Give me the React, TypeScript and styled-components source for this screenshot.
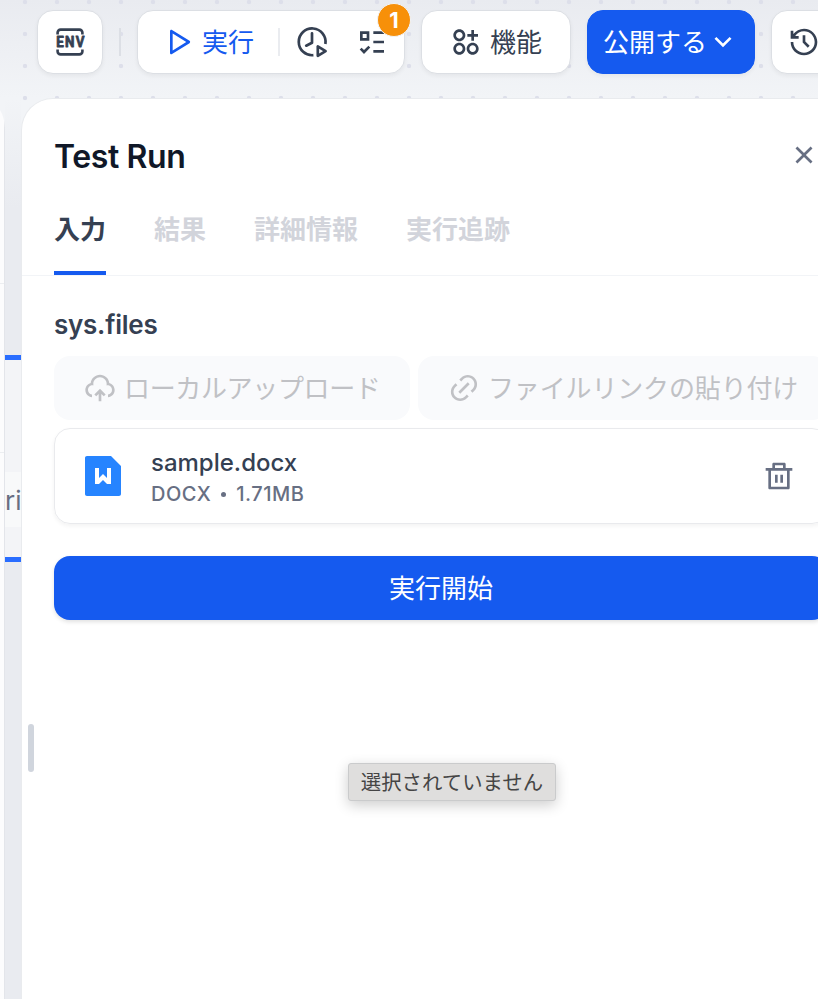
import React, { FC, useState } from 'react'
import styled, { createGlobalStyle } from 'styled-components'
import {
	RiApps2AddLine,
	RiArrowDownSLine,
	RiCloseLine,
	RiDeleteBinLine,
	RiFileWordFill,
	RiHistoryLine,
	RiLink,
	RiListCheck3,
	RiPlayLargeLine,
	RiUploadCloud2Line,
} from 'react-icons/ri'


const tabs = ['入力', '結果', '詳細情報', '実行追跡']

const EnvIcon: FC = () => (
	<svg width='40' height='32' viewBox='-4 0 40 32' fill='none'>
		<path d='M3.6 8.4V6.6a3 3 0 0 1 3-3h18.8a3 3 0 0 1 3 3v1.8' stroke='currentColor' strokeWidth='2.6' />
		<path d='M3.6 23.6v1.8a3 3 0 0 0 3 3h18.8a3 3 0 0 0 3-3v-1.8' stroke='currentColor' strokeWidth='2.6' />
		<EnvText x='2.2' y='21.2' textLength='29.5' lengthAdjust='spacingAndGlyphs'>ENV</EnvText>
	</svg>
)

const ClockPlayIcon: FC = () => (
	<svg width='32' height='32' viewBox='0 0 32 32' fill='none' stroke='currentColor' strokeWidth='2.7'>
		<path d='M17.4 29.2A13.4 13.4 0 1 1 29.4 18' />
		<path d='M16 7.3v9.4l-5.8 3' strokeLinejoin='round' strokeLinecap='round' />
		<path d='M21.8 20.4v9.4l7.8-4.7z' strokeLinejoin='round' />
	</svg>
)

const App: FC = () => {
	const [activeTab, setActiveTab] = useState(tabs[0])

	return (
		<Page>
			<GlobalStyle />
			<Toolbar>
				<EnvButton><EnvIcon /></EnvButton>
				<ToolbarDivider />
				<RunGroup>
					<RunAction><RiPlayLargeLine size={32} /><ButtonText>実行</ButtonText></RunAction>
					<GroupDivider />
					<ClockPlayIcon />
					<Checklist>
						<RiListCheck3 size={32} />
						<Badge>1</Badge>
					</Checklist>
				</RunGroup>
				<FeaturesButton><RiApps2AddLine size={32} /><ButtonText>機能</ButtonText></FeaturesButton>
				<PublishButton><ButtonText>公開する</ButtonText><RiArrowDownSLine size={32} /></PublishButton>
				<HistoryButton><RiHistoryLine size={32} /></HistoryButton>
			</Toolbar>
			<Workspace>
				<SidePanel><SideRow $height={186} /><SideRow $height={169} /></SidePanel>
				<Gutter>
					<NodeSlice><NodeLabel>ri</NodeLabel></NodeSlice>
				</Gutter>
				<Panel>
					<ResizeHandle />
					<Header>
						<Title>Test Run</Title>
						<RiCloseLine size={32} />
					</Header>
					<Tabs>
						{tabs.map((tab) => (
							<Tab key={tab} $active={tab === activeTab} onClick={() => setActiveTab(tab)}>{tab}</Tab>
						))}
					</Tabs>
					<Form>
						<Label>sys.files</Label>
						<UploadRow>
							<UploadButton $width={356}>
								<RiUploadCloud2Line size={32} /><ButtonText $spacing={-0.35}>ローカルアップロード</ButtonText>
							</UploadButton>
							<UploadButton $width={410}>
								<RiLink size={32} /><ButtonText $spacing={-0.15}>ファイルリンクの貼り付け</ButtonText>
							</UploadButton>
						</UploadRow>
						<FileCard>
							<RiFileWordFill size={48} color='#2684ff' />
							<FileInfo>
								<FileName>sample.docx</FileName>
								<FileMeta><span>DOCX</span><Dot /><span>1.71MB</span></FileMeta>
							</FileInfo>
							<RiDeleteBinLine size={32} />
						</FileCard>
						<StartButton>実行開始</StartButton>
					</Form>
					<Tooltip>選択されていません</Tooltip>
				</Panel>
			</Workspace>
		</Page>
	)
}

export default App

const GlobalStyle = createGlobalStyle`
	* {
		box-sizing: border-box;
	}

	body {
		margin: 0;
		overflow: hidden;
	}

	button {
		font: inherit;
	}

	svg {
		flex-shrink: 0;
	}
`

const Page = styled.div`
	width: 818px;
	height: 999px;
	overflow: hidden;
	display: flex;
	flex-direction: column;
	font-family: Inter, 'Noto Sans CJK JP', sans-serif;
	font-size: 26px;
	color: #354052;
	background:
		radial-gradient(circle at 16px 16px, #dddfea 1.8px, transparent 2.6px) 9px -14px / 32px 32px,
		linear-gradient(#e9ebf0 0, #f2f4f7 98px);
`

const Toolbar = styled.div`
	height: 98px;
	flex-shrink: 0;
	display: flex;
	align-items: flex-start;
	gap: 16px;
	padding: 10px 0 0 37px;
`

const ToolButton = styled.button`
	height: 64px;
	flex-shrink: 0;
	display: flex;
	align-items: center;
	padding: 0;
	border: 1px solid #dcdfe4;
	border-radius: 16px;
	background: #fff;
	color: #354052;
	box-shadow: 0 2px 4px rgba(9, 9, 11, 0.05);
`

/* CJK glyphs sit low in their line box, so lift them to the icon's centre */
const ButtonText = styled.span<{ $spacing?: number }>`
	margin-bottom: 4px;
	letter-spacing: ${({ $spacing = 0 }) => $spacing}px;
`

const EnvButton = styled(ToolButton)`
	width: 66px;
	justify-content: center;
`

const EnvText = styled.text`
	font: 700 14.6px Roboto, sans-serif;
	letter-spacing: 1.4px;
	fill: currentColor;
	stroke: currentColor;
	stroke-width: 0.8px;
	stroke-linejoin: round;
`

const ToolbarDivider = styled.div`
	width: 2px;
	height: 28px;
	flex-shrink: 0;
	margin-top: 18px;
	background: #dcdfe5;
`

const RunGroup = styled(ToolButton)`
	width: 268px;
	padding-left: 24px;
`

const RunAction = styled.div`
	display: flex;
	align-items: center;
	gap: 8px;
	color: #155aef;
`

const GroupDivider = styled.div`
	width: 2px;
	height: 28px;
	margin: 0 16px 0 24px;
	background: #eaecf0;
`

const Checklist = styled.div`
	position: relative;
	height: 32px;
	margin-left: 28px;
`

const Badge = styled.div`
	position: absolute;
	left: 21px;
	top: -23px;
	width: 34px;
	height: 34px;
	display: flex;
	align-items: center;
	justify-content: center;
	border: 1px solid #f2f4f7;
	border-radius: 50%;
	background: #f79009;
	color: #fff;
	font-size: 22px;
	font-weight: 700;
`

const FeaturesButton = styled(ToolButton)`
	width: 150px;
	gap: 8px;
	padding-left: 28px;
`

const PublishButton = styled(ToolButton)`
	width: 168px;
	padding-left: 15px;
	border-color: #155aef;
	background: #155aef;
	color: #fff;
`

const HistoryButton = styled(ToolButton)`
	width: 66px;
	padding-left: 16px;
`

const Workspace = styled.div`
	flex: 1;
	display: flex;
`

const SidePanel = styled.div`
	width: 5px;
	flex-shrink: 0;
	overflow: hidden;
	border-right: 1px solid #e3e5ea;
	background: #fcfcfd;
	clip-path: path('M0 12C3 17 5 24 5 32V901H0Z');
`

const SideRow = styled.div<{ $height: number }>`
	height: ${({ $height }) => $height}px;
	border-bottom: 1px solid #eceef1;
`

const Gutter = styled.div`
	width: 16px;
	flex-shrink: 0;
	padding-top: 257px;
	background: linear-gradient(#f2f4f7, #e9ebf0 110px);
`

const NodeSlice = styled.div`
	height: 207px;
	padding-top: 112px;
	border-top: 5px solid #296dff;
	border-bottom: 5px solid #296dff;
	background: #f3f4f7;
`

const NodeLabel = styled.div`
	height: 55px;
	background: #f8f9fa;
	color: #676f83;
	line-height: 57px;
`

const Panel = styled.div`
	position: relative;
	width: 838px;
	flex-shrink: 0;
	border: 1px solid #e9ebee;
	border-bottom: 0;
	border-radius: 32px 32px 0 0;
	background: #fff;
`

const ResizeHandle = styled.div`
	position: absolute;
	left: 6px;
	top: 625px;
	width: 6px;
	height: 48px;
	border-radius: 3px;
	background: #d0d5dd;
`

const Header = styled.div`
	display: flex;
	align-items: center;
	justify-content: space-between;
	height: 112px;
	padding: 0 38px 0 32px;
	color: #676f83;
`

const Title = styled.div`
	padding-top: 2px;
	font-size: 32px;
	font-weight: 600;
	letter-spacing: -0.4px;
	color: #101828;
`

const Tabs = styled.div`
	display: flex;
	gap: 48px;
	height: 65px;
	padding: 2px 0 0 32px;
	border-bottom: 1px solid #f2f4f7;
`

const Tab = styled.div<{ $active: boolean }>`
	height: 62px;
	line-height: 34px;
	font-weight: 700;
	color: ${({ $active }) => $active ? '#354052' : '#d2d4db'};
	border-bottom: 4px solid ${({ $active }) => $active ? '#155aef' : 'transparent'};
`

const Form = styled.div`
	width: 806px;
	padding: 32px 0 0 32px;
`

const Label = styled.div`
	height: 48px;
	line-height: 34px;
	font-weight: 600;
	letter-spacing: -0.25px;
`

const UploadRow = styled.div`
	display: flex;
	gap: 8px;
	margin-bottom: 8px;
`

const UploadButton = styled.div<{ $width: number }>`
	width: ${({ $width }) => $width}px;
	height: 64px;
	flex-shrink: 0;
	display: flex;
	align-items: center;
	gap: 8px;
	padding-left: 30px;
	border-radius: 16px;
	background: #f9fafc;
	color: #c0c1c5;
	white-space: nowrap;
`

const FileCard = styled.div`
	height: 96px;
	display: flex;
	align-items: center;
	padding: 0 32px 0 24px;
	border: 1px solid #e9eaed;
	border-radius: 16px;
	box-shadow: 0 2px 4px rgba(9, 9, 11, 0.05);
	color: #676f83;
`

const FileInfo = styled.div`
	flex: 1;
	margin-left: 24px;
	padding-top: 1px;
`

const FileName = styled.div`
	font-size: 24px;
	line-height: 33px;
	font-weight: 500;
	color: #354052;
`

const FileMeta = styled.div`
	display: flex;
	align-items: center;
	gap: 10px;
	padding-top: 1px;
	font-size: 20px;
	line-height: 28px;
	font-weight: 500;
	letter-spacing: 0.5px;
`

const Dot = styled.span`
	width: 5px;
	height: 5px;
	margin-top: 2px;
	border-radius: 50%;
	background: currentColor;
`

const StartButton = styled.button`
	width: 100%;
	height: 64px;
	margin-top: 32px;
	padding: 0 0 4px;
	border: 0;
	border-radius: 16px;
	background: #155aef;
	box-shadow: 0 2px 4px rgba(9, 9, 11, 0.12);
	color: #fff;
`

const Tooltip = styled.div`
	position: absolute;
	left: 326px;
	top: 664px;
	width: 208px;
	height: 38px;
	border: 1px solid #cacbcc;
	border-radius: 3px;
	background: #dfdedd;
	box-shadow: 0 4px 14px rgba(0, 0, 0, 0.2);
	color: #454545;
	font-size: 20.4px;
	line-height: 37px;
	text-align: center;
	white-space: nowrap;
`
